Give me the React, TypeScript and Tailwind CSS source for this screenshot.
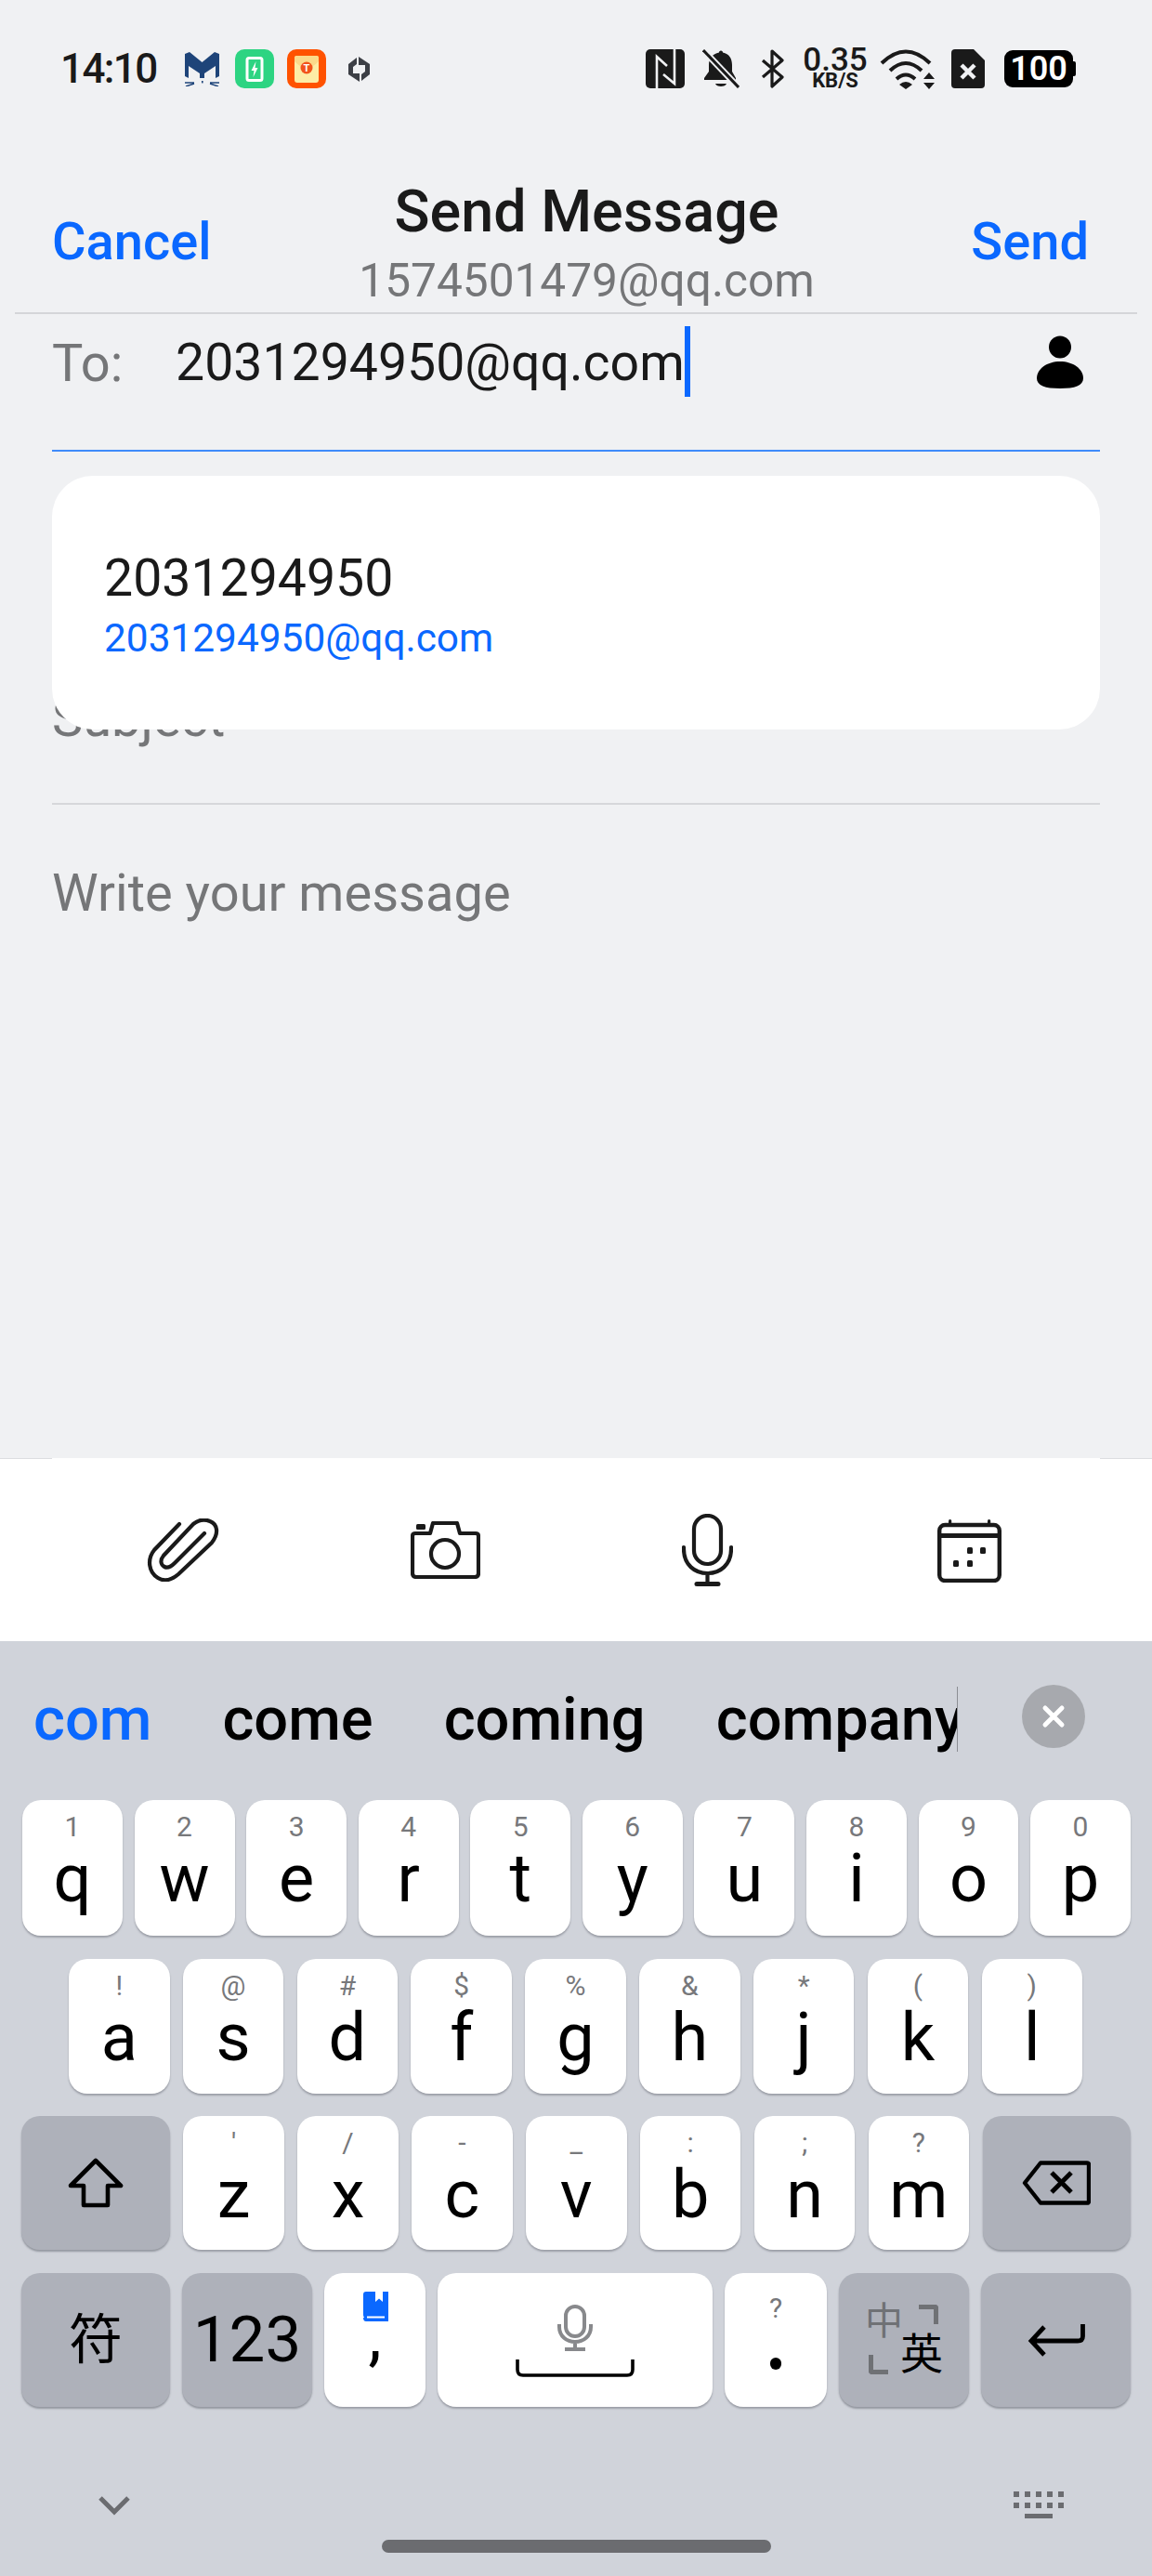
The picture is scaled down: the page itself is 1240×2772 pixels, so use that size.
import type { ReactNode } from 'react'

const FONT = "font-['Roboto','Noto_Sans_CJK_SC',sans-serif]"

function MailCat() {
  return (
    <svg width="37" height="37" viewBox="0 0 37 37">
      <path d="M0 2 L5 0 L18.5 11 L32 0 L37 2 V26 L33 28 V15 L21 23 V28 H16 V23 L4 15 V28 L0 26 Z" fill="#1e4479" />
      <path d="M0 33 H10 M27 33 H37 M1 37 L10 34 M36 37 L27 34" stroke="#1e4479" strokeWidth="1.4" fill="none" />
      <rect x="18" y="31" width="1.6" height="2.4" fill="#1e4479" />
    </svg>
  )
}

function BatteryApp() {
  return (
    <svg width="42" height="42" viewBox="0 0 42 42">
      <rect width="42" height="42" rx="10" fill="#2dd482" />
      <rect x="13" y="9.5" width="16" height="24" rx="2" fill="none" stroke="#fff" strokeWidth="3" />
      <rect x="17" y="8" width="8" height="3" fill="#fff" />
      <path d="M22.5 13 L17.5 23 H20.5 L19.5 30 L24.5 20 H21.5 Z" fill="#fff" />
    </svg>
  )
}

function RedPacketApp() {
  return (
    <svg width="42" height="42" viewBox="0 0 42 42">
      <rect width="42" height="42" rx="10" fill="#ff5200" />
      <rect x="8" y="7" width="26" height="29" rx="3" fill="#fdeca6" />
      <path d="M8 13 Q21 27 34 13 V9 Q34 7 32 7 H10 Q8 7 8 9 Z" fill="#fbd98a" />
      <circle cx="21" cy="20" r="6.5" fill="#f2541b" />
      <text x="21" y="24" textAnchor="middle" fontSize="11" fontWeight="700" fill="#fff" fontFamily="Roboto">T</text>
    </svg>
  )
}

function GrayLogo() {
  return (
    <svg width="23" height="27" viewBox="0 0 23 27">
      <path d="M0 8 L9 1 V8 L5 11 V18 H12 V27 L0 19 Z M23 19 L14 26 V19 L18 16 V9 H11 V0 L23 8 Z" fill="#3c3f45" />
    </svg>
  )
}

function NfcIcon() {
  return (
    <svg width="42" height="42" viewBox="0 0 42 42">
      <rect width="42" height="42" rx="5" fill="#1a1a1a" />
      <path d="M12 42 V8 L23 18 M31 0 V37 L19 27" fill="none" stroke="#f0f1f3" strokeWidth="2.6" />
    </svg>
  )
}

function BellOffIcon() {
  return (
    <svg width="40" height="42" viewBox="0 0 40 42">
      <path d="M20 1.5 C21.5 1.5 22 2.5 22 3.5 C29 5 32 10 32 17 V24 L36 31 V33 H2 V31 L7 24 V17 C7 10 11 5 18 3.5 C18 2.5 18.5 1.5 20 1.5 Z" fill="#1a1a1a" />
      <path d="M14 37 H26 C25 41 15 41 14 37 Z" fill="#1a1a1a" />
      <path d="M1 1 L39 41" stroke="#f0f1f3" strokeWidth="7" />
      <path d="M1 1 L39 41" stroke="#1a1a1a" strokeWidth="3" />
    </svg>
  )
}

function BluetoothIcon() {
  return (
    <svg width="25" height="42" viewBox="0 0 25 42">
      <path d="M2 12 L23 30 L12 40 V2 L23 12 L2 30" fill="none" stroke="#1a1a1a" strokeWidth="3.2" strokeLinejoin="round" />
    </svg>
  )
}

function WifiIcon() {
  return (
    <svg width="59" height="43" viewBox="0 0 59 43">
      <path d="M2 15 Q28 -10 54 15 M11 23 Q28 7 45 23 M18 32 Q28 23 38 32" fill="none" stroke="#1a1a1a" strokeWidth="4" />
      <path d="M21 38 Q28 32 35 38 L28 43 Z" fill="#1a1a1a" />
      <path d="M47 32 L53 25 L59 32 Z M47 36 H59 L53 43 Z" fill="#1a1a1a" />
    </svg>
  )
}

function SimIcon() {
  return (
    <svg width="36" height="42" viewBox="0 0 36 42">
      <path d="M4 0 H24 L36 12 V38 Q36 42 32 42 H4 Q0 42 0 38 V4 Q0 0 4 0 Z" fill="#1a1a1a" />
      <path d="M11 17 L25 31 M25 17 L11 31" stroke="#f0f1f3" strokeWidth="4.5" />
    </svg>
  )
}

function StatusBar() {
  return (
    <div className="h-[148px] flex items-center justify-between pl-[65px] pr-[82px]">
      <div className="flex items-center">
        <span className="text-[44px] leading-[48px] font-medium tracking-[-1.6px] text-[#1a1a1a] w-[134px]">14:10</span>
        <span className="w-[54px]"><MailCat /></span>
        <span className="w-[56px]"><BatteryApp /></span>
        <span className="w-[66px]"><RedPacketApp /></span>
        <GrayLogo />
      </div>
      <div className="flex items-center">
        <span className="mr-[19px]"><NfcIcon /></span>
        <span className="mr-[23px]"><BellOffIcon /></span>
        <span className="mr-[20px]"><BluetoothIcon /></span>
        <div className="w-[70px] mr-[13px] flex flex-col items-center text-[#1a1a1a]">
          <span className="text-[35px] leading-[26px] font-medium">0.35</span>
          <span className="text-[22px] leading-[18px] font-bold">KB/S</span>
        </div>
        <span className="mr-[18px]"><WifiIcon /></span>
        <span className="mr-[21px]"><SimIcon /></span>
        <div className="flex items-center">
          <div className="w-[74px] h-[40px] rounded-[9px] bg-black text-white text-[36px] leading-[40px] font-semibold text-center">100</div>
          <div className="w-[3px] h-[16px] bg-black rounded-r-[2px]" />
        </div>
      </div>
    </div>
  )
}

function Header() {
  return (
    <div className="h-[188px] flex items-start pl-[56px] pr-[68px]">
      <div className="w-[180px] pt-[80px] text-[56px] leading-[64px] font-medium text-[#0a68ff]">Cancel</div>
      <div className="flex-1 flex flex-col items-center pt-[44px]">
        <div className="text-[62.8px] leading-[72px] font-medium text-[#1a1a1a]">Send Message</div>
        <div className="mt-[8px] text-[49.6px] leading-[60px] text-[#757678]">1574501479@qq.com</div>
      </div>
      <div className="w-[145px] pt-[80px] text-right text-[56px] leading-[64px] font-medium text-[#0a68ff]">Send</div>
    </div>
  )
}

function PersonIcon() {
  return (
    <svg width="52" height="57" viewBox="0 0 52 57">
      <circle cx="26" cy="12.5" r="12" fill="#000" />
      <path d="M26 28 C40 28 51 36 51 46 C51 54 42 57 26 57 C10 57 1 54 1 46 C1 36 12 28 26 28 Z" fill="#000" />
    </svg>
  )
}

function ComposeForm() {
  return (
    <div className="h-[1233px] flex flex-col">
      <div className="mx-[16px] h-[2px] bg-[#d4d5d8]" />
      <div className="mt-[13px] h-[76px] flex items-start pl-[56px] pr-[73px]">
        <span className="w-[133px] mt-[8px] text-[56px] leading-[64px] text-[#757678]">To:</span>
        <span className="mt-[8px] text-[55.4px] leading-[64px] text-[#1a1a1a]">2031294950@qq.com</span>
        <span className="w-[6px] h-[76px] bg-[#0a68ff]" />
        <span className="ml-auto mt-[10px]"><PersonIcon /></span>
      </div>
      <div className="mx-[56px] mt-[57px] h-[2px] bg-[#3f8bfa]" />
      <div className="mt-[255px] pl-[56px] text-[56px] leading-[64px] text-[#757678]">Subject</div>
      <div className="mx-[56px] mt-[59px] h-[2px] bg-[#d6d7da]" />
      <div className="mt-[63px] pl-[56px] text-[56px] leading-[64px] text-[#757678]">Write your message</div>
    </div>
  )
}

function Paperclip() {
  return (
    <svg width="78" height="68" viewBox="0 0 78 68">
      <path d="M35 6 L8 34 C0 44 2 58 12 64 C20 69 28 65 34 60 L70 26 C78 16 76 6 68 3 C61 0 55 2 50 6 L18 40 C14 45 15 50 19 52 C23 54 27 51 30 48 L62 16" fill="none" stroke="#1a1a1a" strokeWidth="4.2" strokeLinecap="round" />
    </svg>
  )
}

function Camera() {
  return (
    <svg width="75" height="62" viewBox="0 0 75 62">
      <path d="M5 13 H21 L24 2 H50 L53 13 H70 Q73 13 73 16 V56 Q73 60 69 60 H6 Q2 60 2 56 V16 Q2 13 5 13 Z" fill="none" stroke="#1a1a1a" strokeWidth="4.2" strokeLinejoin="round" />
      <circle cx="37" cy="35" r="15" fill="none" stroke="#1a1a1a" strokeWidth="4.2" />
      <rect x="6" y="3" width="10" height="6" rx="1.5" fill="#1a1a1a" />
    </svg>
  )
}

function Mic() {
  return (
    <svg width="55" height="78" viewBox="0 0 55 78">
      <rect x="13" y="2" width="29" height="52" rx="14.5" fill="none" stroke="#1a1a1a" strokeWidth="4.2" />
      <path d="M2 36 V38 C2 55 14 64 27.5 64 C41 64 53 55 53 38 V36 M27.5 64 V75" fill="none" stroke="#1a1a1a" strokeWidth="4.2" strokeLinecap="round" />
      <path d="M16 75.5 H39" stroke="#1a1a1a" strokeWidth="5" strokeLinecap="round" />
    </svg>
  )
}

function Calendar() {
  return (
    <svg width="69" height="69" viewBox="0 0 69 69">
      <rect x="2.2" y="7" width="64.6" height="60" rx="6" fill="none" stroke="#1a1a1a" strokeWidth="4.4" />
      <rect x="2" y="16" width="65" height="5" fill="#1a1a1a" />
      <rect x="12" y="1" width="3.2" height="7" rx="1.5" fill="#1a1a1a" />
      <rect x="54" y="1" width="3.2" height="7" rx="1.5" fill="#1a1a1a" />
      <rect x="32" y="31" width="6" height="7" rx="1.5" fill="#1a1a1a" />
      <rect x="46" y="31" width="6" height="7" rx="1.5" fill="#1a1a1a" />
      <rect x="17" y="45" width="6" height="7" rx="1.5" fill="#1a1a1a" />
      <rect x="32" y="45" width="6" height="7" rx="1.5" fill="#1a1a1a" />
    </svg>
  )
}

function Toolbar() {
  return (
    <div>
      <div className="flex h-[1px]">
        <div className="w-[56px] bg-[#dcdde0]" />
        <div className="flex-1 bg-white" />
        <div className="w-[56px] bg-[#dcdde0]" />
      </div>
      <div className="h-[196px] bg-white flex items-center px-[56px]">
        <div className="flex-1 flex justify-center"><Paperclip /></div>
        <div className="flex-1 flex justify-center"><Camera /></div>
        <div className="flex-1 flex justify-center"><Mic /></div>
        <div className="flex-1 flex justify-center"><Calendar /></div>
      </div>
    </div>
  )
}

function Suggestions() {
  return (
    <div className="h-[171px] flex items-start">
      <div className="w-[1031px] h-[70px] mt-[49px] border-r border-[#8b8d93] overflow-x-clip flex items-start pl-[36px] gap-[76px] text-[65px] leading-[70px] font-medium whitespace-nowrap text-black">
        <span className="text-[#0a68ff]">com</span>
        <span>come</span>
        <span>coming</span>
        <span>company</span>
      </div>
      <div className="ml-[69px] mt-[47px] w-[68px] h-[68px] rounded-full bg-[#a7a9ae] flex items-center justify-center">
        <svg width="30" height="30" viewBox="0 0 30 30">
          <path d="M6 6 L24 24 M24 6 L6 24" stroke="#fff" strokeWidth="5" strokeLinecap="round" />
        </svg>
      </div>
    </div>
  )
}

function Key({ hint, label, className = '' }: { hint: string; label: string; className?: string }) {
  return (
    <div className={`bg-white rounded-[20px] shadow-[0_2px_2px_rgba(60,64,75,0.35)] flex flex-col items-center text-black ${className}`}>
      <span className="pt-[9px] text-[30px] leading-[40px] text-[#77787b]">{hint}</span>
      <span className="text-[72px] leading-[72px]">{label}</span>
    </div>
  )
}

function DarkKey({ children, className = '' }: { children: ReactNode; className?: string }) {
  return (
    <div className={`bg-[#aeb1ba] rounded-[20px] shadow-[0_2px_2px_rgba(60,64,75,0.4)] flex items-center justify-center text-black ${className}`}>
      {children}
    </div>
  )
}

const ROW1 = [['1', 'q'], ['2', 'w'], ['3', 'e'], ['4', 'r'], ['5', 't'], ['6', 'y'], ['7', 'u'], ['8', 'i'], ['9', 'o'], ['0', 'p']]
const ROW2 = [['!', 'a'], ['@', 's'], ['#', 'd'], ['$', 'f'], ['%', 'g'], ['&', 'h'], ['*', 'j'], ['(', 'k'], [')', 'l']]
const ROW3 = [["'", 'z'], ['/', 'x'], ['-', 'c'], ['_', 'v'], [':', 'b'], [';', 'n'], ['?', 'm']]

function Keyboard() {
  return (
    <div className="h-[1006px] bg-[#d0d3da]">
      <Suggestions />
      <div className="h-[146px] flex gap-[12.6px] pl-[24px] pr-[23px]">
        {ROW1.map(([h, l]) => <Key key={l} hint={h} label={l} className="flex-1" />)}
      </div>
      <div className="mt-[25px] h-[145px] flex gap-[14.3px] pl-[74px] pr-[75px]">
        {ROW2.map(([h, l]) => <Key key={l} hint={h} label={l} className="flex-1" />)}
      </div>
      <div className="mt-[24px] h-[144px] flex gap-[14.3px] pl-[23px] pr-[23px]">
        <DarkKey className="w-[160px]">
          <svg width="60" height="54" viewBox="0 0 60 54">
            <path d="M30 3 L57 30 H43 V51 H17 V30 H3 Z" fill="none" stroke="#000" strokeWidth="4.6" strokeLinejoin="round" />
          </svg>
        </DarkKey>
        {ROW3.map(([h, l]) => <Key key={l} hint={h} label={l} className="w-[108.6px]" />)}
        <DarkKey className="flex-1">
          <svg width="74" height="48" viewBox="0 0 74 48">
            <path d="M20 2.5 H70 Q72 2.5 72 4.5 V43.5 Q72 45.5 70 45.5 H20 L3 24 Z" fill="none" stroke="#000" strokeWidth="4.4" strokeLinejoin="round" />
            <path d="M32 13 L53 34 M53 13 L32 34" stroke="#000" strokeWidth="5" />
          </svg>
        </DarkKey>
      </div>
      <div className="mt-[25px] h-[144px] flex gap-[13px] pl-[23px] pr-[23px]">
        <DarkKey className="w-[160px] text-[58px]">符</DarkKey>
        <DarkKey className="w-[140px] text-[69px]">123</DarkKey>
        <div className="relative w-[109px] bg-white rounded-[20px] shadow-[0_2px_2px_rgba(60,64,75,0.35)]">
          <svg className="absolute left-[42px] top-[20px]" width="27" height="32" viewBox="0 0 27 32">
            <path d="M3 0 H13 V11 L17 7.5 L21 11 V0 H27 V29 H5 Q0 29 0 25 V3 Q0 0 3 0 Z" fill="#0a68ff" />
            <path d="M3 28 H27 V32 H3 Q0 32 0 28 Z" fill="#0a68ff" />
            <rect x="4" y="26.5" width="19" height="2" fill="#fff" />
          </svg>
          <span className="absolute left-0 right-0 top-[32px] text-center text-[72px] leading-[72px] text-black">,</span>
        </div>
        <div className="relative w-[296px] bg-white rounded-[20px] shadow-[0_2px_2px_rgba(60,64,75,0.35)]">
          <svg className="absolute left-[129px] top-[34px]" width="38" height="50" viewBox="0 0 38 50">
            <rect x="9" y="2" width="20" height="32" rx="10" fill="none" stroke="#88898c" strokeWidth="4" />
            <path d="M2 21 V24 C2 34 10 40 19 40 C28 40 36 34 36 24 V21 M19 40 V48 M8 48 H30" fill="none" stroke="#88898c" strokeWidth="4" />
          </svg>
          <svg className="absolute left-[84px] top-[92px]" width="128" height="20" viewBox="0 0 128 20">
            <path d="M2 1 V12 Q2 18 8 18 H120 Q126 18 126 12 V1" fill="none" stroke="#000" strokeWidth="3.6" />
          </svg>
        </div>
        <div className="relative w-[110px] bg-white rounded-[20px] shadow-[0_2px_2px_rgba(60,64,75,0.35)] flex flex-col items-center">
          <span className="pt-[18px] text-[30px] leading-[40px] text-[#77787b]">?</span>
          <span className="mt-[33px] w-[12px] h-[13px] rounded-full bg-black" />
        </div>
        <DarkKey className="relative w-[140px]">
          <span className="absolute left-[28px] top-[28px] text-[41px] leading-[48px] text-[#6f7175]">中</span>
          <span className="absolute left-[66px] top-[60px] text-[46px] leading-[54px] text-black">英</span>
          <span className="absolute left-[86px] top-[34px] w-[21px] h-[21px] border-t-[5px] border-r-[5px] rounded-tr-[4px] border-[#6f7175]" />
          <span className="absolute left-[32px] top-[88px] w-[21px] h-[21px] border-b-[5px] border-l-[5px] rounded-bl-[4px] border-[#6f7175]" />
        </DarkKey>
        <DarkKey className="flex-1">
          <svg width="62" height="36" viewBox="0 0 62 36">
            <path d="M59.5 1 V14 Q59.5 19 54 19 H5 M18 4 L4 19 L18 34" fill="none" stroke="#000" strokeWidth="4.8" />
          </svg>
        </DarkKey>
      </div>
      <div className="mt-[91px] h-[29px] flex items-center justify-between pl-[106px] pr-[95px]">
        <svg width="34" height="22" viewBox="0 0 34 22">
          <path d="M2 3 L17 18 L32 3" fill="none" stroke="#6b6c70" strokeWidth="5" />
        </svg>
        <svg width="54" height="29" viewBox="0 0 54 29">
          <path d="M0 0 H6 V6 H0 Z M12 0 H18 V6 H12 Z M24 0 H30 V6 H24 Z M36 0 H42 V6 H36 Z M48 0 H54 V6 H48 Z M0 12 H6 V18 H0 Z M12 12 H18 V18 H12 Z M24 12 H30 V18 H24 Z M36 12 H42 V18 H36 Z M48 12 H54 V18 H48 Z M12 24 H42 V29 H12 Z" fill="#6b6c70" />
        </svg>
      </div>
      <div className="mx-auto mt-[23px] w-[419px] h-[14px] rounded-full bg-[#6b6c70]" />
    </div>
  )
}

export default function App() {
  return (
    <div className={`relative w-[1240px] h-[2772px] overflow-hidden bg-[#f0f1f3] ${FONT}`}>
      <StatusBar />
      <Header />
      <ComposeForm />
      <div className="absolute left-[56px] top-[512px] w-[1128px] h-[273px] rounded-[44px] bg-white pl-[56px] pt-[79px]">
        <div className="text-[55.4px] leading-[64px] text-[#1a1a1a]">2031294950</div>
        <div className="mt-[7px] text-[42.4px] leading-[50px] text-[#0a68ff]">2031294950@qq.com</div>
      </div>
      <Toolbar />
      <Keyboard />
    </div>
  )
}
